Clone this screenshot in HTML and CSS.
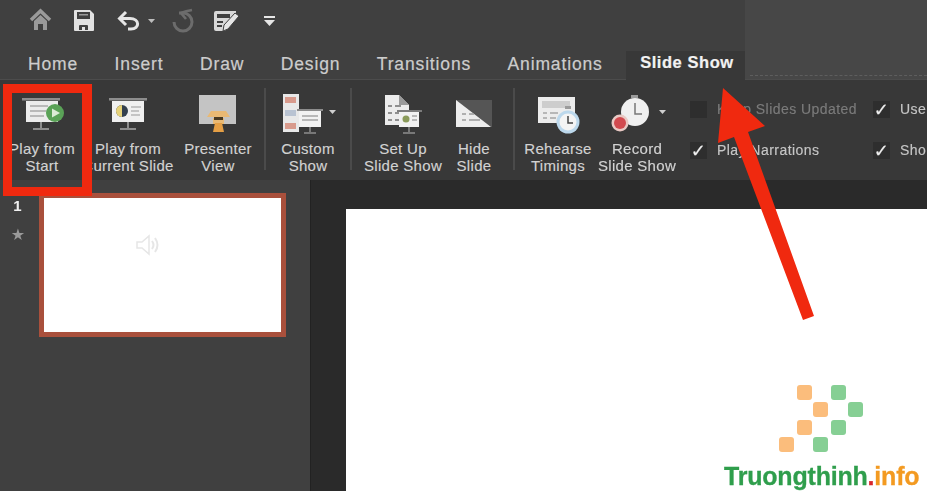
FILE: index.html
```html
<!DOCTYPE html>
<html lang="en">
<head>
 <meta charset="UTF-8">
 <title>Slide Show ribbon</title>
 <link rel="stylesheet" href="styles.css">
</head>
<body>
<div class="app">
 <div class="titlebar">
  <svg class="quick" width="300" height="42" viewBox="0 0 300 42">
   <!-- home -->
   <path d="M31 20 L40.500 11 L50 20" fill="none" stroke="#9a9a9a" stroke-width="3.500"/>
   <path d="M34 21 L40.500 15 L47 21 V30 H43 V24 H38 V30 H34 Z" fill="#9a9a9a"/>
   <!-- save -->
   <path d="M75 10 H90 L94 14 V30 Q94 31 93 31 H75 Q74 31 74 30 V11 Q74 10 75 10 Z" fill="#e2e2e2"/>
   <rect x="77" y="12" width="13" height="7" fill="#404040"/>
   <rect x="79" y="14" width="9" height="1.500" fill="#9a9a9a"/>
   <path d="M79 30 V26 Q79 25 80 25 H87 Q88 25 88 26 V30 H85 V27 H82 V30 Z" fill="#404040"/>
   <!-- undo -->
   <path d="M120 18.500 H130 C140 18.500 140 29 131 29 H128" fill="none" stroke="#e6e6e6" stroke-width="3"/>
   <path d="M126 12 L119.500 18.500 L126 25" fill="none" stroke="#e6e6e6" stroke-width="3"/>
   <path d="M148 19 H155 L151.500 23 Z" fill="#bdbdbd"/>
   <!-- redo, greyed -->
   <path d="M179 13 H183 A9 9 0 1 1 174 22" fill="none" stroke="#6c6c6c" stroke-width="3"/>
   <path d="M192 10 Q186 11 181 13 L186 19" fill="none" stroke="#6c6c6c" stroke-width="2.600"/>
   <!-- edit -->
   <path d="M216 11 H236 V15 L228 25 L225 31 H216 Q214 31 214 29 V13 Q214 11 216 11 Z" fill="#d8d8d8"/>
   <rect x="217" y="14" width="13" height="4" fill="#404040"/>
   <rect x="217" y="21" width="6" height="2" fill="#404040"/>
   <rect x="217" y="25" width="5" height="2" fill="#404040"/>
   <path d="M224 25 L235 13 L239 16 L228 29 L223 31 Z" fill="#e6e6e6" stroke="#404040"/>
   <!-- customize -->
   <rect x="264" y="16" width="11" height="2" fill="#e6e6e6"/>
   <path d="M264 20 H275 L269.500 26 Z" fill="#e6e6e6"/>
  </svg>
 </div>

 <div class="tabs">
  <span class="tab">Home</span>
  <span class="tab">Insert</span>
  <span class="tab">Draw</span>
  <span class="tab">Design</span>
  <span class="tab">Transitions</span>
  <span class="tab">Animations</span>
  <span class="tab tab-active">Slide Show</span>
 </div>

 <div class="ribbon">
  <div class="btn w-start">
   <svg class="ico" width="60" height="48" viewBox="0 0 60 48">
    <rect x="10" y="6" width="38" height="2.500" fill="#8d8d8d"/>
    <rect x="14" y="9" width="32" height="21" fill="#ececec"/>
    <path d="M18 14 H36 M18 19 H34 M18 24 H32" stroke="#a8a8a8" stroke-width="1.500"/>
    <path d="M29 30 V36 M21 37 H37" stroke="#8d8d8d" stroke-width="2"/>
    <circle cx="43" cy="21" r="9" fill="#5aa257"/>
    <path d="M40 16.500 L48 21 L40 25.500 Z" fill="#dcebd6"/>
   </svg>
   <div class="lbl">Play from<br>Start</div>
  </div>
  <div class="btn w-current">
   <svg class="ico" width="60" height="48" viewBox="0 0 60 48">
    <rect x="11" y="6" width="38" height="2.500" fill="#8d8d8d"/>
    <rect x="14" y="9" width="32" height="21" fill="#f0f0f0"/>
    <circle cx="24" cy="19" r="6" fill="#33404f"/>
    <path d="M24 13 A6 6 0 0 0 24 25 Z" fill="#e6d27a"/>
    <path d="M33 15 H43 M33 19 H41 M33 23 H42" stroke="#b5b5b5" stroke-width="1.500"/>
    <path d="M30 30 V36 M22 37 H38" stroke="#8d8d8d" stroke-width="2"/>
   </svg>
   <div class="lbl">Play from<br>Current Slide</div>
  </div>
  <div class="btn w-presenter">
   <svg class="ico" width="60" height="48" viewBox="0 0 60 48">
    <rect x="11" y="3" width="37" height="29" fill="#c4c4c4"/>
    <path d="M19 25 L23 19 H38 L42 25 Z" fill="#e9b974"/>
    <rect x="25" y="26" width="11" height="6" fill="#e9b974"/>
    <rect x="26" y="25" width="9" height="3" fill="#4a3a22"/>
    <path d="M25 40 L27 31 H34 L36 40 Z" fill="#e59f45"/>
   </svg>
   <div class="lbl">Presenter<br>View</div>
  </div>
  <div class="sep"></div>
  <div class="btn w-custom">
   <svg class="ico" width="70" height="48" viewBox="0 0 70 48">
    <rect x="10" y="2" width="16" height="38" fill="#e8e8e8"/>
    <rect x="12" y="5" width="11" height="6" fill="#d89a8c"/>
    <rect x="12" y="18" width="11" height="6" fill="#b9c3d2"/>
    <rect x="12" y="31" width="11" height="6" fill="#d89a8c"/>
    <rect x="24" y="17" width="26" height="2" fill="#8d8d8d"/>
    <rect x="26" y="19" width="22" height="16" fill="#f2f2f2"/>
    <path d="M29 24 H45 M29 28 H45" stroke="#a5a5a5" stroke-width="1.500"/>
    <path d="M37 35 V40 M31 41 H43" stroke="#8d8d8d" stroke-width="1.500"/>
    <path d="M56 18 H63 L59.500 22 Z" fill="#d0d0d0"/>
   </svg>
   <div class="lbl">Custom<br>Show</div>
  </div>
  <div class="sep sep-b"></div>
  <div class="btn w-setup">
   <svg class="ico" width="60" height="48" viewBox="0 0 60 48">
    <path d="M12 3 H26 L36 13 V33 H12 Z" fill="#ececec"/>
    <path d="M26 3 L36 13 H26 Z" fill="#9a9a9a"/>
    <path d="M15 14 H19 M22 14 H28 M15 21 H19 M22 21 H26 M15 28 H19 M22 28 H26" stroke="#8f8f8f" stroke-width="2"/>
    <rect x="24" y="18" width="25" height="2" fill="#7c7c7c"/>
    <rect x="26" y="20" width="20" height="15" fill="#f1f1f1"/>
    <circle cx="33" cy="27" r="3.500" fill="#8a9a5a"/>
    <path d="M39 24 H44 M39 28 H44" stroke="#a5a5a5" stroke-width="1.500"/>
    <path d="M36 35 V40 M30 41 H42" stroke="#8d8d8d" stroke-width="1.500"/>
   </svg>
   <div class="lbl">Set Up<br>Slide Show</div>
  </div>
  <div class="btn w-hide">
   <svg class="ico" width="44" height="48" viewBox="0 0 44 48">
    <path d="M4 8 H40 V35 H4 Z" fill="#555"/>
    <path d="M4 8 L39 35 H4 Z" fill="#ededed"/>
    <path d="M10 22 H14 M17 22 H22 M10 28 H14 M17 28 H28" stroke="#9b9b9b" stroke-width="1.500"/>
   </svg>
   <div class="lbl">Hide<br>Slide</div>
  </div>
  <div class="sep sep-c"></div>
  <div class="btn w-rehearse">
   <svg class="ico" width="60" height="48" viewBox="0 0 60 48">
    <rect x="10" y="5" width="37" height="26" fill="#ececec"/>
    <rect x="14" y="9" width="28" height="7" fill="#cdcdcd"/>
    <path d="M15 21 H19 M22 21 H30 M15 26 H19 M22 26 H28" stroke="#a5a5a5" stroke-width="1.500"/>
    <rect x="37" y="14" width="6" height="3" fill="#9b9b9b"/>
    <circle cx="40" cy="30" r="11.500" fill="#bcd8ec"/>
    <circle cx="40" cy="30" r="8.500" fill="#f4f4f4"/>
    <path d="M40 24 V31 H45" fill="none" stroke="#444" stroke-width="1.500"/>
   </svg>
   <div class="lbl">Rehearse<br>Timings</div>
  </div>
  <div class="btn w-record">
   <svg class="ico" width="70" height="48" viewBox="0 0 70 48">
    <rect x="29" y="3" width="7" height="3" fill="#9b9b9b"/>
    <circle cx="33" cy="20" r="14" fill="#f0f0f0"/>
    <path d="M33 11 V22 H40" fill="none" stroke="#777" stroke-width="1.500"/>
    <circle cx="18" cy="31" r="8.500" fill="#e9c9c4"/>
    <circle cx="18" cy="31" r="6" fill="#d24a4f"/>
    <path d="M57 18 H64 L60.500 22 Z" fill="#d0d0d0"/>
   </svg>
   <div class="lbl">Record<br>Slide Show</div>
  </div>
  <div class="opts">
   <div class="opt off"><span class="box"></span>Keep Slides Updated</div>
   <div class="opt"><span class="box">✓</span>Use</div>
   <div class="opt"><span class="box">✓</span>Play Narrations</div>
   <div class="opt"><span class="box">✓</span>Sho</div>
  </div>
 </div>

 <div class="workspace">
  <div class="thumbs">
   <div class="thumb-meta">
    <span class="num">1</span>
    <span class="star">★</span>
   </div>
   <div class="thumb">
    <svg width="28" height="24" viewBox="0 0 28 24">
     <path d="M2 9 H7 L14 3 V21 L7 15 H2 Z" fill="none" stroke="#e6e6e6" stroke-width="1.500"/>
     <path d="M17 8 Q20 12 17 16 M20 5 Q25 12 20 19" fill="none" stroke="#e6e6e6" stroke-width="2"/>
    </svg>
   </div>
  </div>
  <div class="stage">
   <div class="slide"></div>
  </div>
 </div>
</div>

<!-- annotations drawn on top of the screenshot -->
<div class="redbox"></div>
<svg class="arrow" width="110" height="245" viewBox="0 0 110 245">
 <path d="M8 0 L3 55 L19 49 L88 232 L99 228 L33 44 L50 38 Z" fill="#f0290f"/>
</svg>
<div class="logo">
 <svg class="logo-mark" width="84" height="67" viewBox="0 0 84 67">
  <g fill="#fbbd7c">
   <rect x="18" y="0" width="15" height="15" rx="3"/>
   <rect x="34" y="17" width="15" height="15" rx="3"/>
   <rect x="18" y="35" width="15" height="15" rx="3"/>
   <rect x="0" y="52" width="15" height="15" rx="3"/>
  </g>
  <g fill="#86cf94">
   <rect x="52" y="0" width="15" height="15" rx="3"/>
   <rect x="69" y="17" width="15" height="15" rx="3"/>
   <rect x="52" y="35" width="15" height="15" rx="3"/>
   <rect x="34" y="52" width="15" height="15" rx="3"/>
  </g>
 </svg>
 <div class="logo-text">Truongthinh<span class="dot">.</span><span class="info">info</span></div>
</div>
</body>
</html>
```

FILE: styles.css
```css
html, body{
  margin: 0;
  height: 100%;
  overflow: hidden;
  background: #2a2a2a;
}
body{
  position: relative;
  font-family: "Liberation Sans", Arial, sans-serif;
}
.app{
  display: flex;
  flex-direction: column;
  height: 491px;
  filter: blur(0.5px);
}
.titlebar{
  height: 42px;
  flex: none;
  background: linear-gradient(to right, #404040 745px, #474747 745px);
}
.quick{
  display: block;
}

/* tabs */
.tabs{
  display: flex;
  align-items: flex-end;
  height: 38px;
  flex: none;
  padding-left: 14px;
  background: linear-gradient(to right, #404040 745px, #474747 745px);
  box-shadow: inset 0 -1px 0 #4c4c4c;
  color: #cdcdcd;
  font-size: 17.5px;
  letter-spacing: 0.85px;
  -webkit-text-stroke: 0.2px currentColor;
}
.tabs::after{
  content: "";
  flex: 1;
  margin: 0 0 4px 5px;
  border-bottom: 1px dashed #5e5e5e;
}
.tab{
  padding: 0 14px 5px;
  margin-right: 8.5px;
  line-height: 22px;
  white-space: nowrap;
}
.tab-active{
  margin-left: 1px;
  margin-right: 0;
  padding: 0 11px 4px 14px;
  height: 29px;
  box-sizing: border-box;
  background: #383838;
  color: #f2f2f2;
  font-weight: bold;
  font-size: 16.5px;
  letter-spacing: 0.55px;
}

/* ribbon */
.ribbon{
  display: flex;
  height: 100px;
  flex: none;
  background: #383838;
  color: #d2d2d2;
  font-size: 15px;
  line-height: 17px;
  letter-spacing: 0.3px;
  -webkit-text-stroke: 0.15px currentColor;
}
.btn{
  display: flex;
  flex-direction: column;
  align-items: center;
  flex: none;
  padding-top: 12px;
  text-align: center;
}
.ico{
  display: block;
  flex: none;
}
.lbl{
  white-space: nowrap;
}
.w-start{ width: 84px; }
.w-current{ width: 88px; }
.w-presenter{ width: 92px; }
.w-custom{ width: 84px; }
.w-setup{ width: 98px; }
.w-hide{ width: 44px; }
.w-rehearse{ width: 84px; }
.w-record{ width: 74px; }
.sep{
  flex: none;
  width: 2px;
  height: 82px;
  margin: 8px 0 0;
  background: #4b4b4b;
}
.sep-b{
  margin-right: 2px;
}
.sep-c{
  margin: 8px 1px 0 17px;
}
.opts{
  display: grid;
  grid-template-columns: 183px 54px;
  grid-auto-rows: 41px;
  margin: 9px 0 0 16px;
  flex: none;
  font-size: 14px;
  letter-spacing: 0.45px;
  color: #c6c6c6;
}
.opt{
  display: flex;
  align-items: center;
  white-space: nowrap;
}
.box{
  display: flex;
  align-items: center;
  justify-content: center;
  width: 17px;
  height: 17px;
  margin-right: 10px;
  flex: none;
  background: #2e2e2e;
  color: #efefef;
  font-size: 18px;
  font-family: "DejaVu Sans", sans-serif;
}
.off{
  color: #7b7b7b;
}

/* lower area */
.workspace{
  display: flex;
  flex: 1;
  min-height: 0;
}
.thumbs{
  display: flex;
  align-items: flex-start;
  width: 311px;
  flex: none;
  padding-top: 13px;
  box-sizing: border-box;
  background: #404040;
  border-right: 1px solid #222;
}
.thumb-meta{
  display: flex;
  flex-direction: column;
  align-items: center;
  width: 39px;
  flex: none;
  margin-top: 4px;
}
.num{
  color: #f0f0f0;
  font-weight: bold;
  font-size: 15px;
  line-height: 17px;
  margin-left: -4px;
}
.star{
  color: #9a9a9a;
  font-size: 16px;
  line-height: 17px;
  margin: 12px 0 0 -3px;
  font-family: "DejaVu Sans", sans-serif;
}
.thumb{
  display: flex;
  align-items: center;
  justify-content: center;
  width: 247px;
  height: 144px;
  padding: 0 28px 40px 0;
  box-sizing: border-box;
  border: 5px solid #a9503c;
  background: #fff;
}
.stage{
  flex: 1;
  padding: 29px 0 0 35px;
  background: #2a2a2a;
}
.slide{
  height: 100%;
  background: #fff;
}

/* red annotations */
.redbox{
  position: absolute;
  left: 3px;
  top: 84px;
  width: 70px;
  height: 94px;
  border: 9px solid #f0290f;
  border-right-width: 10px;
}
.arrow{
  position: absolute;
  left: 715px;
  top: 88px;
}
.logo{
  position: absolute;
  left: 724px;
  top: 385px;
  width: 203px;
}
.logo-mark{
  display: block;
  margin-left: 55px;
}
.logo-text{
  margin-top: 9px;
  color: #2f9e4c;
  font-weight: bold;
  font-size: 25px;
  line-height: 30px;
  letter-spacing: -0.2px;
  white-space: nowrap;
  -webkit-text-stroke: 0.3px currentColor;
}
.dot{
  color: #d8262c;
}
.info{
  color: #f39a21;
}
```
